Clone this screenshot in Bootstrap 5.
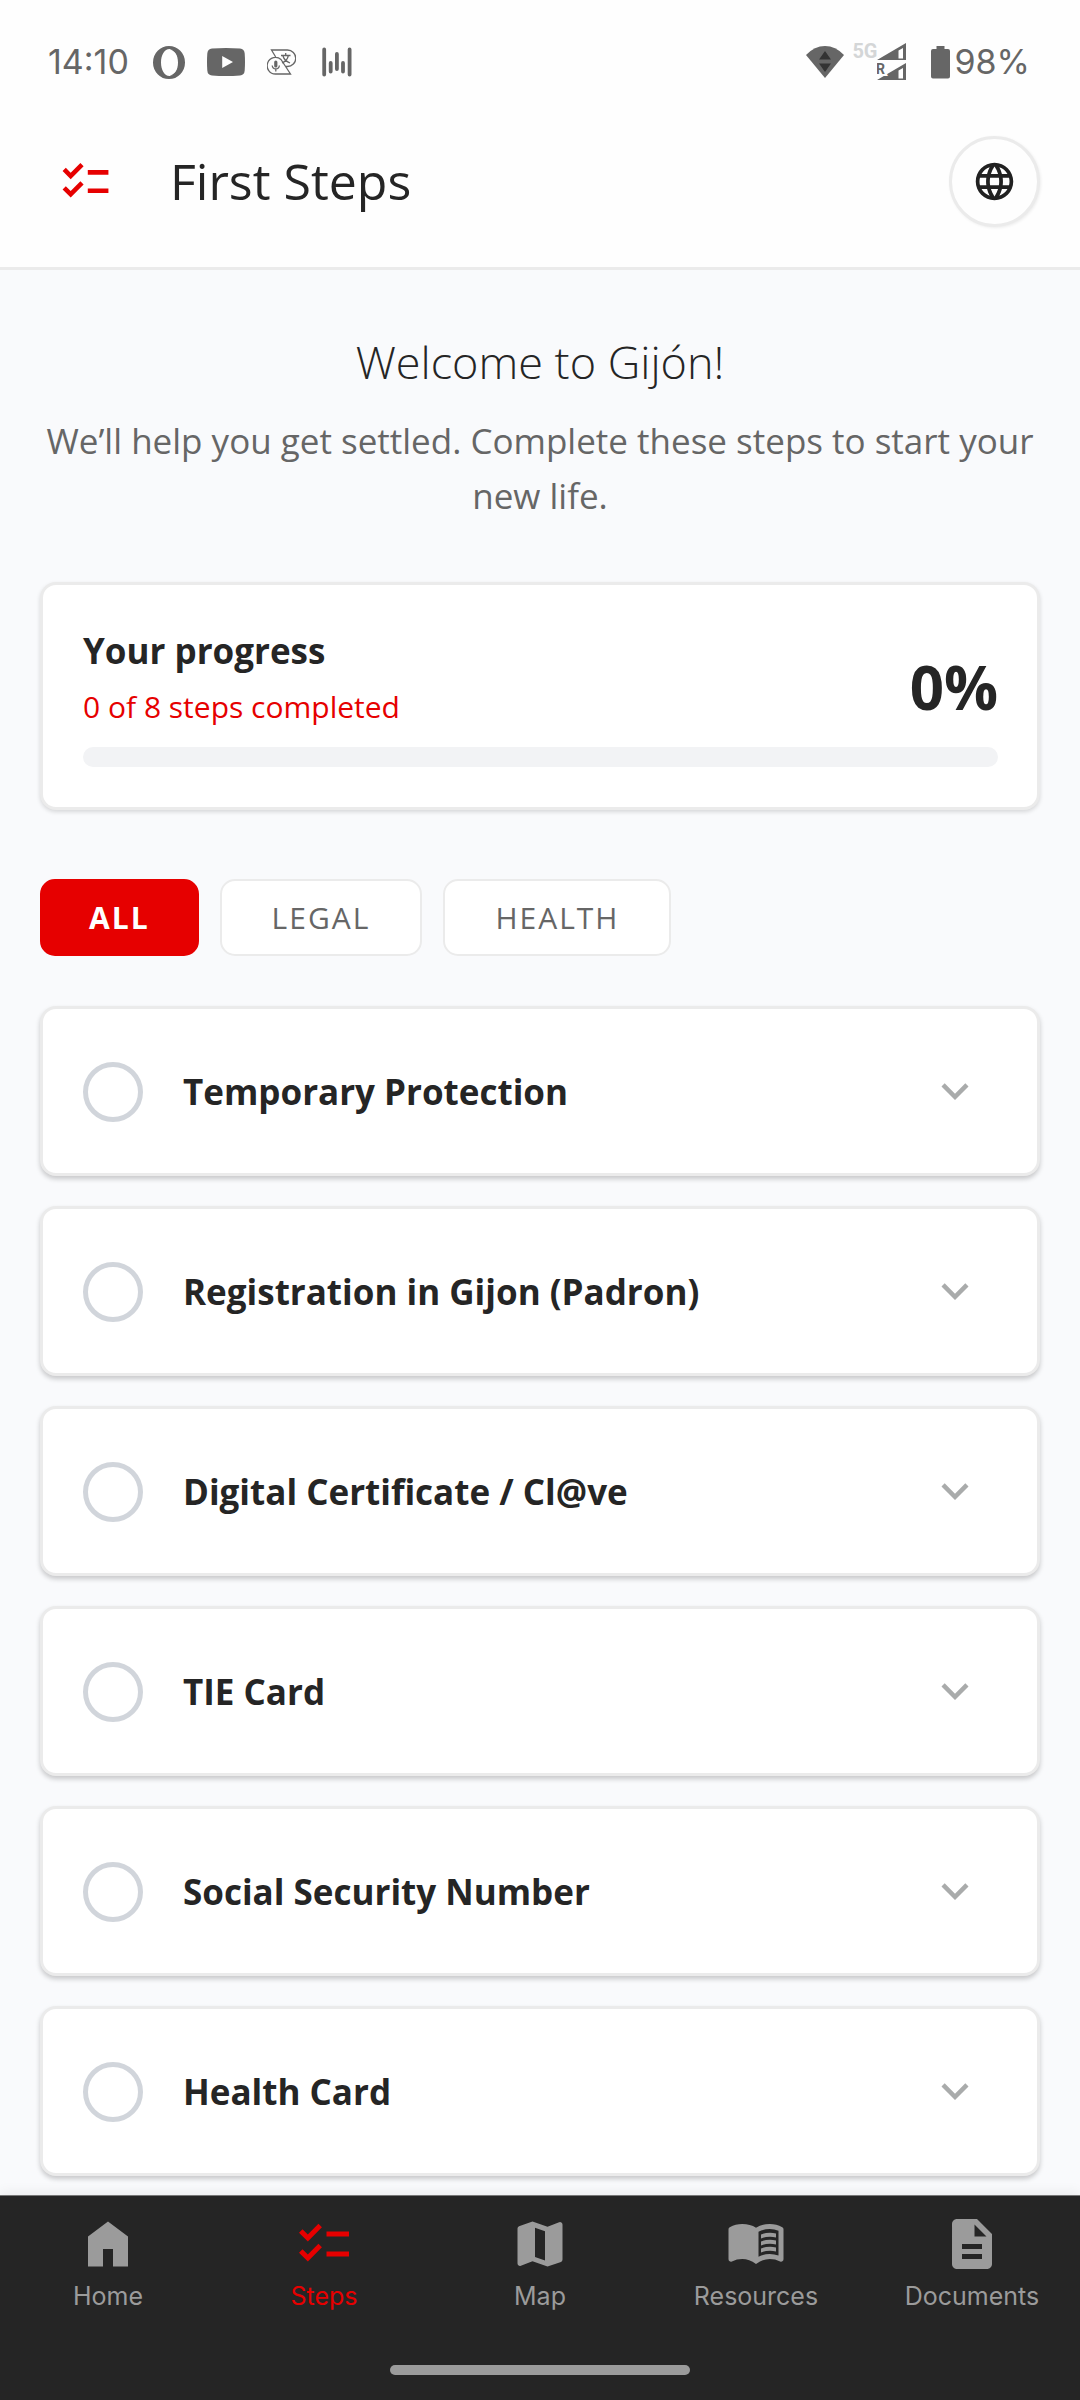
<!DOCTYPE html>
<html lang="en">
<head>
<meta charset="utf-8">
<meta name="viewport" content="width=device-width, initial-scale=1">
<title>First Steps</title>
<link href="https://cdn.jsdelivr.net/npm/bootstrap@5.3.0/dist/css/bootstrap.min.css" rel="stylesheet">
<style>
  :root { --brand: #e60000; --ink: #252525; --soft: #666; --line: #ebebeb; }
  body { font-family: "Open Sans", "Noto Sans", sans-serif; color: var(--ink); background: #f9fafc; }
  svg { display: block; flex: none; }
  svg:not(.outline-icon) { fill: currentColor; }
  .outline-icon { fill: none; stroke: currentColor; }
  h1, h2, h3, p { margin: 0; }

  .status-bar { height: 95px; padding: 30px 50px 0 48px; color: var(--soft); background: #fefefe; font: 400 34px/64px Inter, sans-serif; }
  .status-icons { height: 64px; }
  .app-icons { gap: 22px; }
  .net-label { font: 700 20px/24px Roboto, sans-serif; color: #d4d6d7; height: 46px; }
  .signal-label { font: 700 14px Roboto, sans-serif; paint-order: stroke; stroke: #fefefe; stroke-width: 4px; }

  .app-header { height: 175px; padding: 0 40px; background: #fefefe; border-bottom: 3px solid var(--line); }
  .brand-icon { width: 90px; color: var(--brand); }
  .app-title { margin-left: 40px; font-size: 50px; line-height: 68px; font-weight: 400; }
  .lang-btn { width: 91px; height: 91px; padding: 0; border: 3px solid var(--line); background: #fefefe; color: #212121; box-shadow: 1px 1px 3px rgba(0,0,0,.07); }

  .page-main { padding: 62px 40px 19px; }
  .welcome-title { font-size: 45px; line-height: 60px; font-weight: 300; }
  .welcome-text { margin-top: 21px; font-size: 35px; line-height: 55px; color: var(--soft); }

  .panel { border: 3px solid var(--line); border-radius: 16px; background: #fff; box-shadow: 0 2px 4px rgba(0,0,0,.14); }
  .progress-panel { margin-top: 59px; padding: 41px 39px 40px 40px; }
  .progress-title { font-size: 35px; line-height: 50px; font-weight: 700; }
  .progress-note { margin-top: 9px; font-size: 30px; line-height: 44px; color: var(--brand); }
  .progress-value { font-size: 60px; line-height: 84px; font-weight: 700; }
  .progress-track { margin-top: 18px; height: 20px; border-radius: 10px; background: #f2f3f5; }

  .filters { margin-top: 69px; gap: 21px; }
  .filter-btn { height: 77px; padding: 0 50px; font-size: 30px; line-height: 44px; letter-spacing: 2px; border: 2px solid var(--line); border-radius: 15px; background: #fff; color: var(--soft); }
  .filter-btn.active { padding: 0 47px; background: var(--brand); border-color: var(--brand); color: #fff; font-weight: 700; }

  .steps { margin-top: 50px; gap: 30px; }
  .step { height: 170px; padding: 2px 55px 0 40px; gap: 40px; box-shadow: 0 3px 5px rgba(0,0,0,.2); }
  .step-check.form-check-input { width: 60px; height: 60px; margin: 0; border: 5px solid #d1d5db; border-radius: 50%; flex: none; }
  .step-name { font-size: 35px; line-height: 50px; font-weight: 700; }
  .step-toggle { padding: 0 0 3px; border: 0; color: #a9abab; }

  .tab-bar { background: #252525; border-top: 1px solid #777; box-shadow: 0 -3px 12px rgba(0,0,0,.06); padding: 18px 0 25px; }
  .tab-link { flex: 1 1 0; color: #9b9b9b; font: 400 25px/30px Inter, sans-serif; text-decoration: none; gap: 7px; }
  .tab-link.active { color: var(--brand); }
  .home-handle { width: 300px; height: 10px; margin-top: 54px; border-radius: 5px; background: #9b9b9b; }
</style>
<script src="https://cdn.jsdelivr.net/npm/bootstrap@5.3.0/dist/js/bootstrap.bundle.min.js"></script>
</head>
<body class="d-flex flex-column min-vh-100">

<svg width="0" height="0" class="d-none" aria-hidden="true">
  <symbol id="i-check" viewBox="0 0 24 24"><path d="M22 7h-9v2h9zM22 15h-9v2h9zM5.54 11 2 7.46l1.41-1.41 2.12 2.12 4.24-4.24 1.41 1.41zM5.54 19 2 15.46l1.41-1.41 2.12 2.12 4.24-4.24 1.41 1.41z"/></symbol>
  <symbol id="i-down" viewBox="0 0 24 24"><path d="M16.59 8.59 12 13.17 7.41 8.59 6 10l6 6 6-6z"/></symbol>
</svg>

<div class="status-bar d-flex justify-content-between">
  <div class="d-flex">
    <span>14:10</span>
    <div class="status-icons app-icons d-flex align-items-center ms-4">
      <svg width="32" height="33" viewBox="0 0 32 33"><path fill-rule="evenodd" d="M16 0a16 16.500 0 1 0 0 33 16 16.500 0 1 0 0-33zM16.500 3c-5 0-8.500 6-8.500 13.500S11.500 30 16.500 30 25 24 25 16.500 21.500 3 16.500 3z"/><path d="M17 3.500c3-1 6 .5 8 2.500l-1 3c-2-3-4-4.500-7-5.500zM17 29.500c3 1 6-.5 8-2.500l-1-3c-2 3-4 4.500-7 5.500z"/></svg>
      <svg width="38" height="28" viewBox="0 0 38 28"><path fill-rule="evenodd" d="M5 .6Q19-.6 33 .6q4.400.4 4.700 5 .6 8.400 0 16.800-.3 4.600-4.700 5-14 1.200-28 0-4.400-.4-4.700-5-.6-8.400 0-16.800Q.6 1 5 .6zM15.200 8v12l10.800-6z"/></svg>
      <svg class="outline-icon" width="29" height="26" viewBox="0 0 29 26" stroke-width="1.300"><path d="M18.500 17.500h2a8.200 8.200 0 0 0 0-16.500H4.500l4.200 7M14 10.500 23.500 25H8.700a8.300 8.300 0 1 1 5.300-14.500z"/><rect x="7.200" y="11.500" width="3.200" height="7" rx="1.600" fill="currentColor" stroke="none"/><path d="M5.200 16.500q.4 3.400 3.600 3.400t3.600-3.400M8.800 20v2.400M14 6.500h9.500M18.700 4v2.500M15 14q5.500-2.300 6.300-7.300M16 7q1.200 4.500 7 7" /></svg>
      <svg class="outline-icon ms-1" width="30" height="30" viewBox="0 0 30 30" stroke-width="3.800" stroke-linecap="round"><path d="M2.200 2.500v25M8.700 16v8.500M14.900 7v15M21 16v8.500M27.600 2.500v25"/></svg>
    </div>
  </div>
  <div class="d-flex">
    <div class="status-icons d-flex align-items-center">
      <svg width="38" height="32" viewBox="0 0 38 32"><path d="M0 9Q8.500 0 19 0t19 9L19 32z"/><path fill="#333" d="M19 5l6 8.500H13zM13 17.500h12L19 26z"/></svg>
      <span class="net-label ms-2">5G</span>
      <svg width="30" height="38" viewBox="0 0 30 38"><path fill-rule="evenodd" d="M0 17 29 0v17zM21.500 7.500v8h4.500V5zM0 37 29 20v17zM21.500 27.500v8h4.500V25z"/><text class="signal-label" x="-1" y="31">R</text></svg>
      <svg class="ms-4" width="19" height="33" viewBox="0 0 19 33"><path d="M5.500 0h8v3H17q2 0 2 2v25.500q0 2-2 2H2q-2 0-2-2V5q0-2 2-2h3.500z"/></svg>
    </div>
    <span class="ms-1">98%</span>
  </div>
</div>

<header class="app-header d-flex align-items-center">
  <div class="brand-icon d-flex justify-content-center"><svg width="55" height="55"><use href="#i-check"/></svg></div>
  <h1 class="app-title flex-grow-1">First Steps</h1>
  <button type="button" class="lang-btn btn rounded-circle d-flex align-items-center justify-content-center" aria-label="Language">
    <svg width="45" height="45" viewBox="0 0 24 24"><path d="M11.990 2C6.470 2 2 6.480 2 12s4.470 10 9.990 10C17.520 22 22 17.520 22 12S17.520 2 11.990 2zm6.930 6h-2.950c-.32-1.250-.78-2.450-1.380-3.560 1.840.63 3.370 1.910 4.330 3.560zM12 4.040c.83 1.200 1.480 2.530 1.910 3.960h-3.820c.43-1.430 1.080-2.760 1.910-3.960zM4.260 14C4.100 13.360 4 12.690 4 12s.1-1.360.26-2h3.380c-.08.66-.14 1.320-.14 2 0 .68.06 1.340.14 2H4.260zm.82 2h2.950c.32 1.250.78 2.450 1.380 3.560-1.840-.63-3.370-1.900-4.330-3.560zm2.950-8H5.080c.96-1.660 2.490-2.930 4.330-3.560C8.810 5.550 8.350 6.750 8.030 8zM12 19.960c-.83-1.200-1.480-2.530-1.910-3.960h3.820c-.43 1.430-1.080 2.760-1.910 3.960zM14.340 14H9.660c-.09-.66-.16-1.320-.16-2 0-.68.07-1.350.16-2h4.680c.09.65.16 1.320.16 2 0 .68-.07 1.340-.16 2zm.25 5.560c.6-1.110 1.060-2.310 1.380-3.560h2.950c-.96 1.650-2.490 2.930-4.330 3.560zM16.360 14c.08-.66.14-1.320.14-2 0-.68-.06-1.340-.14-2h3.380c.16.64.26 1.310.26 2s-.1 1.360-.26 2h-3.380z"/></svg>
  </button>
</header>

<main class="page-main">
  <div class="text-center">
    <h2 class="welcome-title">Welcome to Gijón!</h2>
    <p class="welcome-text">We’ll help you get settled. Complete these steps to start your new life.</p>
  </div>

  <section class="panel progress-panel">
    <div class="d-flex justify-content-between align-items-end">
      <div>
        <h3 class="progress-title">Your progress</h3>
        <p class="progress-note">0 of 8 steps completed</p>
      </div>
      <div class="progress-value">0%</div>
    </div>
    <div class="progress progress-track" role="progressbar" aria-label="Your progress" aria-valuenow="0" aria-valuemin="0" aria-valuemax="100"><div class="progress-bar" style="width:0%"></div></div>
  </section>

  <div class="filters d-flex">
    <button type="button" class="btn filter-btn active">ALL</button>
    <button type="button" class="btn filter-btn">LEGAL</button>
    <button type="button" class="btn filter-btn">HEALTH</button>
  </div>

  <div class="steps d-flex flex-column">
    <div class="panel step d-flex align-items-center"><input class="form-check-input step-check" type="checkbox" id="s1"><label class="step-name flex-grow-1" for="s1">Temporary Protection</label><button type="button" class="btn step-toggle" aria-label="Expand Temporary Protection"><svg width="54" height="54"><use href="#i-down"/></svg></button></div>
    <div class="panel step d-flex align-items-center"><input class="form-check-input step-check" type="checkbox" id="s2"><label class="step-name flex-grow-1" for="s2">Registration in Gijon (Padron)</label><button type="button" class="btn step-toggle" aria-label="Expand Registration in Gijon"><svg width="54" height="54"><use href="#i-down"/></svg></button></div>
    <div class="panel step d-flex align-items-center"><input class="form-check-input step-check" type="checkbox" id="s3"><label class="step-name flex-grow-1" for="s3">Digital Certificate / Cl@ve</label><button type="button" class="btn step-toggle" aria-label="Expand Digital Certificate"><svg width="54" height="54"><use href="#i-down"/></svg></button></div>
    <div class="panel step d-flex align-items-center"><input class="form-check-input step-check" type="checkbox" id="s4"><label class="step-name flex-grow-1" for="s4">TIE Card</label><button type="button" class="btn step-toggle" aria-label="Expand TIE Card"><svg width="54" height="54"><use href="#i-down"/></svg></button></div>
    <div class="panel step d-flex align-items-center"><input class="form-check-input step-check" type="checkbox" id="s5"><label class="step-name flex-grow-1" for="s5">Social Security Number</label><button type="button" class="btn step-toggle" aria-label="Expand Social Security Number"><svg width="54" height="54"><use href="#i-down"/></svg></button></div>
    <div class="panel step d-flex align-items-center"><input class="form-check-input step-check" type="checkbox" id="s6"><label class="step-name flex-grow-1" for="s6">Health Card</label><button type="button" class="btn step-toggle" aria-label="Expand Health Card"><svg width="54" height="54"><use href="#i-down"/></svg></button></div>
  </div>
</main>

<nav class="tab-bar mt-auto sticky-bottom d-flex flex-column align-items-center">
  <div class="d-flex w-100">
    <a href="#" class="tab-link d-flex flex-column align-items-center"><svg width="60" height="60" viewBox="0 0 24 24"><path d="M4 21V9l8-6 8 6v12h-6v-7h-4v7z"/></svg>Home</a>
    <a href="#" class="tab-link active d-flex flex-column align-items-center" aria-current="page"><svg width="60" height="60"><use href="#i-check"/></svg>Steps</a>
    <a href="#" class="tab-link d-flex flex-column align-items-center"><svg width="60" height="60" viewBox="0 0 24 24"><path fill-rule="evenodd" d="m15 21-6-2.100-4.650 1.800q-.5.200-.9-.06T3 19.800v-14q0-.7.600-.95L9 3l6 2.100 4.650-1.800q.5-.2.900.06T21 4.200v14q0 .7-.6.950zM14 18.550V6.850l-4-1.400v11.700z"/></svg>Map</a>
    <a href="#" class="tab-link d-flex flex-column align-items-center"><svg width="60" height="60" viewBox="0 0 24 24"><path fill-rule="evenodd" d="M12 20q-2.700-2-5.500-2-2.200 0-4.150.95-.45.250-.9-.03T1 18.100V6.050q0-.5.500-.75Q3.800 4 6.500 4 9.700 4 12 5.500 14.300 4 17.500 4q2.700 0 5 1.300.5.250.5.750V18.100q0 .54-.45.820t-.9.030Q19.700 18 17.500 18q-2.800 0-5.500 2zM13 17.100q2.200-1.100 4.500-1.100 1.800 0 3.500.6V6.700Q19.400 6 17.500 6q-2.500 0-4.500 1.100z"/><path d="M14 8.200q3-1.200 6-.4v1.600q-3-.8-6 .4zM14 11q3-1.200 6-.4v1.600q-3-.8-6 .4zM14 13.800q3-1.200 6-.4V15q-3-.8-6 .4z"/></svg>Resources</a>
    <a href="#" class="tab-link d-flex flex-column align-items-center"><svg width="60" height="60" viewBox="0 0 24 24"><path d="M14 2H6c-1.100 0-1.990.9-1.990 2L4 20c0 1.100.89 2 1.990 2H18c1.100 0 2-.9 2-2V8l-6-6zm2 16H8v-2h8v2zm0-4H8v-2h8v2zm-3-5V4.200L17.800 9H13z"/></svg>Documents</a>
  </div>
  <div class="home-handle"></div>
</nav>
</body>
</html>
